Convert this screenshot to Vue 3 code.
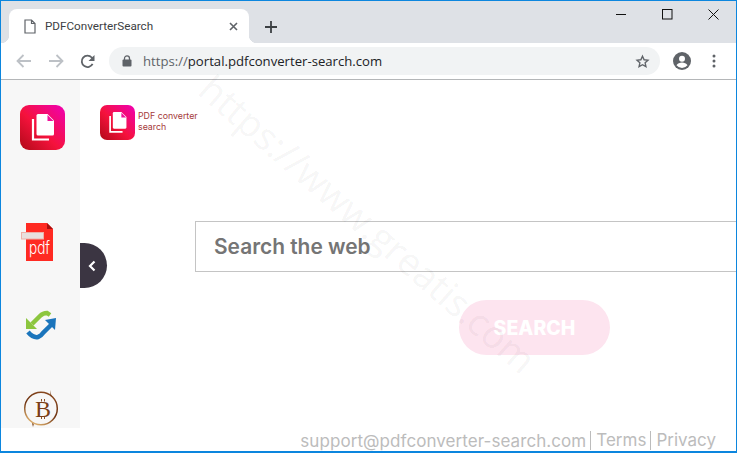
<script setup>
const sideIcons = ['app', 'pdf', 'sync', 'btc']
</script>

<template>
  <div class="window">
    <header class="tabstrip">
      <div class="tab">
        <svg class="favicon" width="12" height="15" viewBox="0 0 12 15"><path d="M1 1h6.500L11 4.500V14H1z M7.500 1v3.500H11" fill="none" stroke="#5f6368" stroke-width="1.200"/></svg>
        <span class="tab-title">PDFConverterSearch</span>
        <svg class="tab-close" width="9" height="9" viewBox="0 0 9 9"><path d="M1 1l7 7M8 1l-7 7" stroke="#5f6368" stroke-width="1.600"/></svg>
      </div>
      <svg class="new-tab" width="12" height="12" viewBox="0 0 12 12"><path d="M6 0v12M0 6h12" stroke="#3c4043" stroke-width="1.800"/></svg>
      <div class="win-controls">
        <svg width="11" height="11" viewBox="0 0 11 11"><path d="M0 5.500h10" stroke="#111" stroke-width="1"/></svg>
        <svg width="11" height="11" viewBox="0 0 11 11"><rect x=".5" y=".5" width="9.500" height="9.500" fill="none" stroke="#111"/></svg>
        <svg width="11" height="11" viewBox="0 0 11 11"><path d="M.5.500l10 10M10.500.500l-10 10" stroke="#111"/></svg>
      </div>
    </header>

    <nav class="toolbar">
      <svg width="16" height="14" viewBox="0 0 16 14"><path d="M15 7H2M7.500 1L1.500 7l6 6" fill="none" stroke="#bdc1c6" stroke-width="1.800"/></svg>
      <svg width="16" height="14" viewBox="0 0 16 14"><path d="M1 7h13M8.500 1l6 6-6 6" fill="none" stroke="#bdc1c6" stroke-width="1.800"/></svg>
      <svg width="15" height="15" viewBox="0 0 15 15"><path d="M12.600 9.800A5.700 5.700 0 1 1 11.700 3.500L13.500 5.300" fill="none" stroke="#5f6368" stroke-width="1.800"/><path d="M14.500 1v6h-6z" fill="#5f6368"/></svg>
      <div class="omnibox">
        <svg width="10" height="12" viewBox="0 0 10 12"><path d="M2.500 5V3.400a2.500 2.500 0 0 1 5 0V5" fill="none" stroke="#5f6368" stroke-width="1.300"/><rect x=".5" y="4.500" width="9" height="7" rx="1" fill="#5f6368"/></svg>
        <span class="url"><span class="scheme">https://</span>portal.pdfconverter-search.com</span>
        <svg class="star" width="15" height="15" viewBox="0 0 24 24"><path d="M12 3.500l2.600 5.700 6.200.7-4.600 4.200 1.300 6.100L12 17.100l-5.500 3.100 1.300-6.100-4.600-4.200 6.200-.7z" fill="none" stroke="#5f6368" stroke-width="2.200"/></svg>
      </div>
      <svg class="avatar" width="18" height="18" viewBox="0 0 18 18"><circle cx="9" cy="9" r="9" fill="#5f6368"/><circle cx="9" cy="6.700" r="3" fill="#fff"/><path d="M3.500 13.300c1-2 3.400-2.800 5.500-2.800s4.500.8 5.500 2.800a7 7 0 0 1-11 0z" fill="#fff"/></svg>
      <svg class="dots" width="4" height="14" viewBox="0 0 4 14"><circle cx="2" cy="2" r="1.500" fill="#5f6368"/><circle cx="2" cy="7" r="1.500" fill="#5f6368"/><circle cx="2" cy="12" r="1.500" fill="#5f6368"/></svg>
    </nav>

    <section class="page">
      <div class="content">
        <aside class="sidebar">
          <template v-for="icon in sideIcons" :key="icon">
            <svg v-if="icon === 'app'" class="side-app" width="45" height="45" viewBox="0 0 45 45">
              <defs>
                <linearGradient id="appGrad" x1="0" y1="1" x2="1" y2="0">
                  <stop offset="0" stop-color="#b00a18"/><stop offset=".45" stop-color="#f5123c"/><stop offset="1" stop-color="#f000b4"/>
                </linearGradient>
              </defs>
              <rect width="45" height="45" rx="9" fill="url(#appGrad)"/>
              <path d="M18 9h9.500l6.500 6.500V29a1.500 1.500 0 0 1-1.500 1.500H18a1.500 1.500 0 0 1-1.500-1.500V10.500A1.500 1.500 0 0 1 18 9z" fill="#fff"/>
              <path d="M27.500 10v6h6z" fill="#f0109a"/>
              <path d="M13 14v20.500h16" fill="none" stroke="#fff" stroke-width="2.200"/>
            </svg>
            <svg v-else-if="icon === 'pdf'" class="side-pdf" width="33" height="40" viewBox="0 0 33 40">
              <path d="M5 1h21l6 6v32H5z" fill="#ff2a22"/>
              <path d="M26 1l6 6h-6z" fill="#a80f0f"/>
              <rect x=".5" y="10.500" width="22" height="6.500" fill="#e8e0de" stroke="#eeb0a8"/>
              <text x="8" y="32" class="pdf-word" textLength="21" lengthAdjust="spacingAndGlyphs">pdf</text>
            </svg>
            <svg v-else-if="icon === 'sync'" class="side-sync" width="40" height="40" viewBox="0 0 40 40">
              <path d="M11 19l8-8q3-3 7-3l3 2" fill="none" stroke="#8cc63f" stroke-width="4.500"/>
              <path d="M5 13v11h11z" fill="#8cc63f"/>
              <path d="M7 27q5 6 10 5 3-1 5-4l8-8" fill="none" stroke="#1b75bc" stroke-width="4.500"/>
              <path d="M24 15l11-2-1 12z" fill="#1b75bc"/>
            </svg>
            <svg v-else class="side-btc" width="40" height="40" viewBox="0 0 40 40">
              <defs>
                <linearGradient id="ringGrad" x1=".8" y1="0" x2=".3" y2="1">
                  <stop offset="0" stop-color="#8a4a20"/><stop offset=".55" stop-color="#6e3312"/><stop offset="1" stop-color="#e2b36e"/>
                </linearGradient>
              </defs>
              <circle cx="20" cy="19.500" r="16.300" fill="none" stroke="url(#ringGrad)" stroke-width="1.500"/>
              <path d="M29 1l.6 6 1.200 1z M11 34l1 4 .8-3z" fill="#7a3f16"/>
              <path d="M20.500 10v2.500M23.500 10v2.500M20.500 27.500v2.500M23.500 27.500v2.500" stroke="#8a5228" stroke-width="1"/>
              <text x="22" y="28" class="btc-word" text-anchor="middle">B</text>
            </svg>
          </template>
        </aside>

        <main class="main">
          <div class="logo">
            <svg width="35" height="35" viewBox="0 0 45 45">
              <defs>
                <linearGradient id="logoGrad" x1="0" y1="1" x2="1" y2="0">
                  <stop offset="0" stop-color="#b00a18"/><stop offset=".45" stop-color="#f5123c"/><stop offset="1" stop-color="#f000b4"/>
                </linearGradient>
              </defs>
              <rect width="45" height="45" rx="9" fill="url(#logoGrad)"/>
              <path d="M18 9h9.500l6.500 6.500V29a1.500 1.500 0 0 1-1.500 1.500H18a1.500 1.500 0 0 1-1.500-1.500V10.500A1.500 1.500 0 0 1 18 9z" fill="#fff"/>
              <path d="M27.500 10v6h6z" fill="#f0109a"/>
              <path d="M13 14v20.500h16" fill="none" stroke="#fff" stroke-width="2.200"/>
            </svg>
            <div class="logo-text">PDF converter<br>search</div>
          </div>
          <div class="search-box">Search the web</div>
          <button class="search-btn">SEARCH</button>
        </main>
      </div>

      <footer class="footer">
        <span class="mail">support@pdfconverter-search.com</span>
        <span class="sep">Terms</span>
        <span class="sep">Privacy</span>
      </footer>

      <button class="toggle" aria-label="Collapse">
        <svg width="8" height="12" viewBox="0 0 8 12"><path d="M6.500 1.500L2 6l4.500 4.500" fill="none" stroke="#fff" stroke-width="2.200"/></svg>
      </button>
      <div class="watermark">https://www.greatis.com</div>
    </section>
  </div>
</template>

<style>
html, body { margin: 0; background: #fff; }
</style>

<style scoped>
.window {
  width: 737px;
  height: 453px;
  box-sizing: border-box;
  border: 1px solid #0c86de;
  border-bottom-width: 2px;
  display: flex;
  flex-direction: column;
  overflow: hidden;
  font-family: "Open Sans", "Liberation Sans", sans-serif;
  background: #fff;
}
.tabstrip {
  height: 42px;
  flex: none;
  display: flex;
  align-items: flex-end;
  background: #dee1e6;
  padding-left: 8px;
  position: relative;
}
.tab {
  width: 240px;
  height: 34px;
  box-sizing: border-box;
  background: #fff;
  border-radius: 8px 8px 0 0;
  display: flex;
  align-items: center;
  padding: 0 11px 0 15px;
  position: relative;
}
.tab::before, .tab::after {
  content: "";
  position: absolute;
  bottom: 0;
  width: 8px;
  height: 8px;
}
.tab::before { left: -8px; background: radial-gradient(circle at 0 0, transparent 8px, #fff 8.500px); }
.tab::after { right: -8px; background: radial-gradient(circle at 100% 0, transparent 8px, #fff 8.500px); }
.tab-title {
  margin-left: 9px;
  font-family: Roboto, "Open Sans", sans-serif;
  font-size: 11.700px;
  color: #3c4043;
  flex: 1;
  white-space: nowrap;
}
.new-tab { margin: 0 0 10px 16px; }
.win-controls {
  margin-left: auto;
  display: flex;
  gap: 35px;
  padding: 0 17px 23px 0;
  align-self: flex-end;
}
.toolbar {
  height: 37px;
  flex: none;
  box-sizing: border-box;
  border-bottom: 1px solid #b4b6b8;
  display: flex;
  align-items: center;
  padding-left: 15px;
}
.toolbar > svg:nth-child(2) { margin-left: 16px; }
.toolbar > svg:nth-child(3) { margin-left: 16px; }
.omnibox {
  width: 551px;
  height: 28px;
  margin-left: 14px;
  box-sizing: border-box;
  background: #f1f3f4;
  border-radius: 14px;
  display: flex;
  align-items: center;
  padding: 0 10px 0 13px;
}
.url {
  margin-left: 11px;
  font-size: 13.150px;
  color: #202124;
  flex: 1;
  white-space: nowrap;
}
.scheme { color: #5f6368; }
.avatar { margin-left: 13px; }
.dots { margin-left: 21px; }
.page {
  flex: 1;
  min-height: 0;
  display: flex;
  flex-direction: column;
  position: relative;
}
.content {
  height: 348px;
  flex: none;
  display: flex;
}
.sidebar {
  width: 79px;
  flex: none;
  background: #f7f7f7;
  display: flex;
  flex-direction: column;
  align-items: center;
  padding-top: 25px;
  box-sizing: border-box;
  overflow: hidden;
}
.side-app { flex: none; margin-left: 4px; }
.side-pdf { flex: none; margin: 72px 0 0 -6px; }
.side-sync { flex: none; margin-top: 43px; }
.side-btc { flex: none; margin-top: 44px; }
.pdf-word {
  font: 300 17px Inter, "Open Sans", sans-serif;
  fill: #fff;
}
.btc-word {
  font: 400 24px "Liberation Serif", serif;
  fill: #7a3f16;
}
.main {
  flex: 1;
  min-width: 0;
  position: relative;
  padding: 25px 0 0 20px;
  box-sizing: border-box;
  font-family: Inter, "Open Sans", sans-serif;
}
.logo {
  display: flex;
  align-items: center;
  gap: 3px;
}
.logo-text {
  font-family: Inter, "Open Sans", sans-serif;
  font-size: 8.800px;
  font-weight: 400;
  line-height: 10.500px;
  color: #a53a3a;
  padding-bottom: 2px;
}
.search-box {
  width: 640px;
  height: 51px;
  box-sizing: border-box;
  border: 1px solid #c4c4c4;
  margin: 81px 0 0 95px;
  padding-left: 18px;
  display: flex;
  align-items: center;
  font-size: 20.900px;
  font-weight: 600;
  color: #757575;
}
.search-btn {
  display: block;
  width: 151px;
  height: 55px;
  margin: 28px 0 0 359px;
  border: 0;
  padding: 0;
  border-radius: 28px;
  background: #fde4ef;
  color: #fff;
  font: 800 19.500px Inter, "Open Sans", sans-serif;
}
.footer {
  flex: 1;
  display: flex;
  justify-content: flex-end;
  align-items: center;
  padding: 2px 20px 0 0;
  font-family: Inter, "Open Sans", sans-serif;
  font-weight: 400;
  font-size: 17px;
  color: #bcbcbc;
  white-space: nowrap;
}
.mail { letter-spacing: .07px; }
.sep {
  border-left: 1px solid #bcbcbc;
  margin-left: 4px;
  padding-left: 5px;
  line-height: 19px;
}
.toggle {
  position: absolute;
  left: 79px;
  top: 163px;
  width: 27px;
  height: 45px;
  border: 0;
  padding: 0 4px 0 0;
  border-radius: 0 23px 23px 0;
  background: #3b3542;
  display: flex;
  align-items: center;
  justify-content: center;
}
.watermark {
  position: absolute;
  left: 152px;
  top: 118px;
  font-family: "Open Sans", sans-serif;
  font-weight: 400;
  font-size: 37.700px;
  color: rgba(0, 0, 0, .055);
  white-space: nowrap;
  transform: rotate(41deg);
  pointer-events: none;
}
</style>
